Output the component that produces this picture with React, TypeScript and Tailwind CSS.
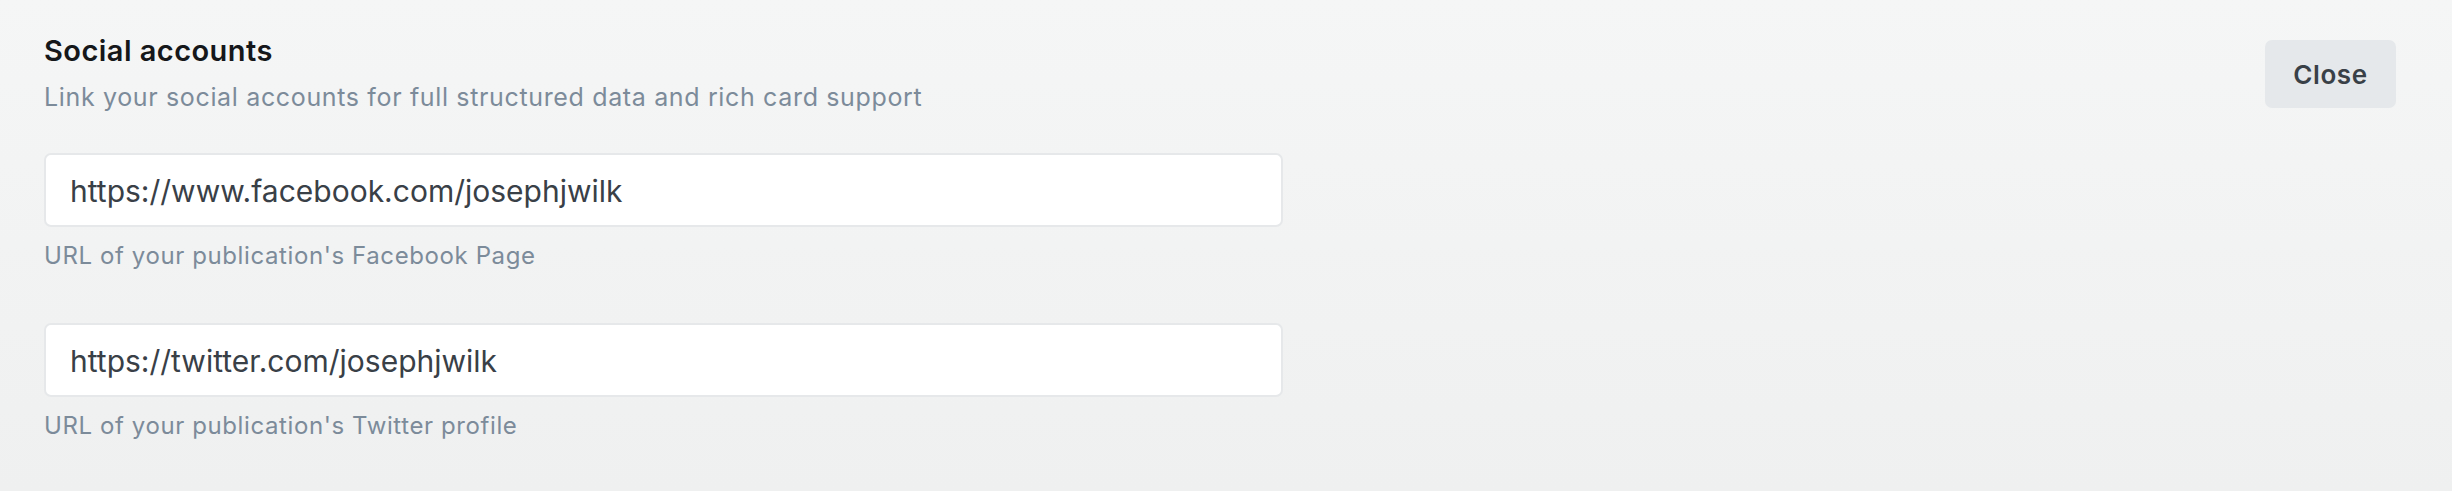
import React from "react";

export default function App() {
  const font = { fontFamily: "Inter, 'Noto Sans', sans-serif" };
  return (
    <div
      style={font}
      className="w-full h-[491px] bg-gradient-to-b from-[#f5f6f6] to-[#eff0f0] pl-[44px] pr-[56px] flex justify-between items-start"
    >
      <div className="w-[1239px] flex flex-col">
        <h2 className="pt-[33px] text-[29px] leading-[36px] font-semibold text-[#15171a] tracking-[0.45px]">
          Social accounts
        </h2>
        <p className="mt-[12px] text-[25px] leading-[32px] text-[#7c8b9a] tracking-[0.65px]">
          Link your social accounts for full structured data and rich card support
        </p>
        <div className="mt-[40px] h-[74px] bg-white border-[2px] border-[#e6e8ea] rounded-[7px] flex items-center pl-[24px] pt-[2px]">
          <span className="text-[30px] text-[#394047]">https://www.facebook.com/josephjwilk</span>
        </div>
        <p className="mt-[13px] text-[24px] leading-[32px] text-[#7c8b9a] tracking-[0.6px]">
          URL of your publication's Facebook Page
        </p>
        <div className="mt-[51px] h-[74px] bg-white border-[2px] border-[#e6e8ea] rounded-[7px] flex items-center pl-[24px] pt-[2px]">
          <span className="text-[30px] text-[#394047]">https://twitter.com/josephjwilk</span>
        </div>
        <p className="mt-[13px] text-[24px] leading-[32px] text-[#7c8b9a] tracking-[0.6px]">
          URL of your publication's Twitter profile
        </p>
      </div>
      <button className="mt-[40px] w-[131px] h-[68px] rounded-[7px] bg-[#e5e8eb] text-[#394047] text-[26px] font-semibold tracking-[0.6px]">
        Close
      </button>
    </div>
  );
}
